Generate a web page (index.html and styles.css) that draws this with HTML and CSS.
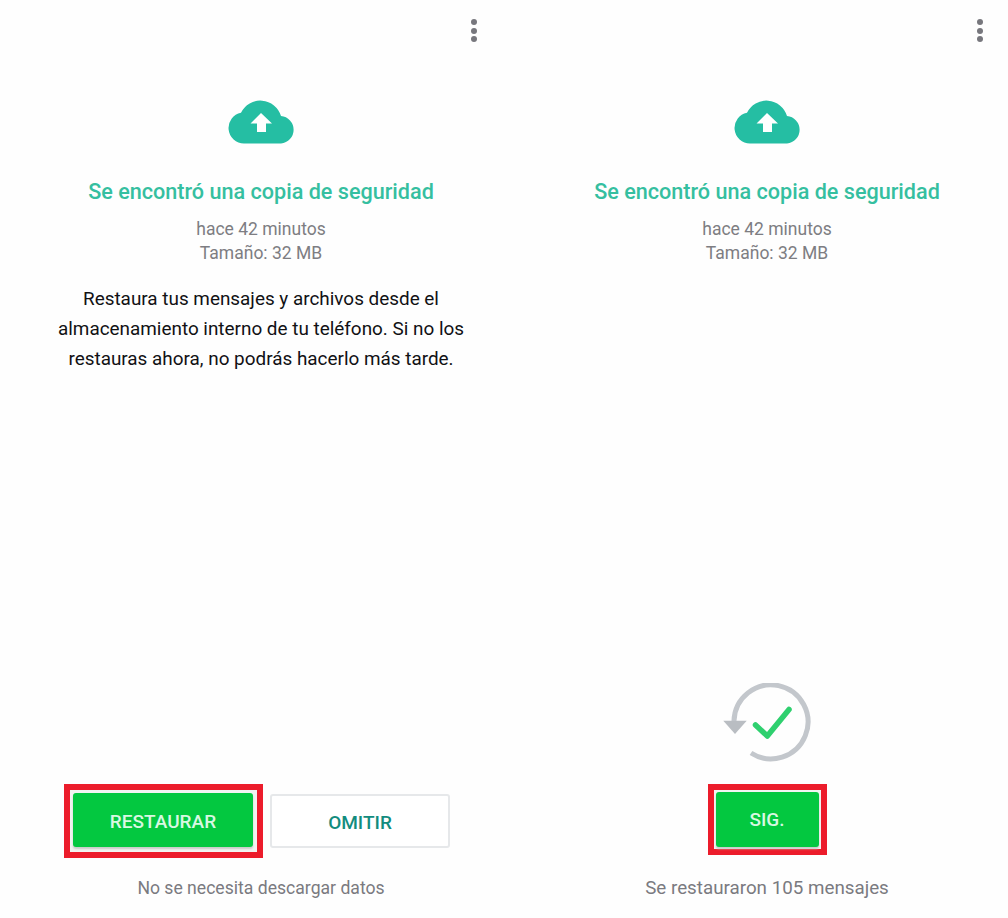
FILE: index.html
```html
<!DOCTYPE html>
<html lang="es">
<head>
<meta charset="utf-8">
<title>Copia de seguridad</title>
<link rel="stylesheet" href="styles.css">
</head>
<body>
<main class="page">
  <section class="panel">
    <div class="menu"><span class="dot"></span><span class="dot"></span><span class="dot"></span></div>
    <svg class="cloud" viewBox="0 0 66 44"><path fill="#25bea3" d="M16 43.500A15.500 15.500 0 0 1 13 12.800A21.500 21.500 0 0 1 53 16A13.800 13.800 0 0 1 53 43.500Z"/><path fill="#fff" d="M33 13 44 23.500H38V32H29V23.500H22.500Z"/></svg>
    <h1 class="title">Se encontró una copia de seguridad</h1>
    <p class="meta">hace 42 minutos<br>Tamaño: 32 MB</p>
    <p class="body">Restaura tus mensajes y archivos desde el almacenamiento interno de tu teléfono. Si no los restauras ahora, no podrás hacerlo más tarde.</p>
    <div class="actions">
      <div class="frame frame-wide"><button class="btn btn-primary btn-wide">RESTAURAR</button></div>
      <button class="btn btn-outline">OMITIR</button>
    </div>
    <p class="foot">No se necesita descargar datos</p>
  </section>
  <section class="panel">
    <div class="menu"><span class="dot"></span><span class="dot"></span><span class="dot"></span></div>
    <svg class="cloud" viewBox="0 0 66 44"><path fill="#25bea3" d="M16 43.500A15.500 15.500 0 0 1 13 12.800A21.500 21.500 0 0 1 53 16A13.800 13.800 0 0 1 53 43.500Z"/><path fill="#fff" d="M33 13 44 23.500H38V32H29V23.500H22.500Z"/></svg>
    <h1 class="title">Se encontró una copia de seguridad</h1>
    <p class="meta">hace 42 minutos<br>Tamaño: 32 MB</p>
    <svg class="restored" viewBox="0 0 90 80"><path fill="none" stroke="#c3c7cc" stroke-width="5" d="M12 38A37 37 0 1 1 29 70"/><path fill="#b9bdc2" d="M1.300 37.700H24.700L13 51z"/><path fill="none" stroke="#2fd06f" stroke-width="5.500" stroke-linecap="round" stroke-linejoin="round" d="M33.500 42 45.300 53 67 26.500"/></svg>
    <div class="frame frame-narrow"><button class="btn btn-primary btn-narrow">SIG.</button></div>
    <p class="foot foot-done">Se restauraron 105 mensajes</p>
  </section>
</main>
</body>
</html>
```
FILE: styles.css
```css
* { box-sizing: border-box; }
html, body { margin: 0; height: 100%; background: #fefefe; overflow: hidden; }
body { font-family: Roboto, "Liberation Sans", sans-serif; }
.page { display: flex; gap: 24px; padding-left: 20px; height: 918px; }
.panel { width: 482px; height: 918px; display: flex; flex-direction: column; align-items: center; position: relative; }
.menu { position: absolute; top: 19px; right: 25px; display: flex; flex-direction: column; gap: 2.5px; }
.dot { width: 6px; height: 6px; border-radius: 50%; background: #77777d; }
.cloud { width: 66px; height: 44px; margin-top: 100px; flex: none; }
.title { margin: 33px 0 0; font-size: 21.6px; line-height: 30px; font-weight: 500; color: #35bfa0; white-space: nowrap; }
.meta { margin: 10px 0 0; font-size: 17.5px; line-height: 24px; color: #7d7d82; text-align: center; }
.body { margin: 19px 0 0; width: 420px; font-size: 18.9px; line-height: 30px; color: #111114; text-align: center; }
.actions { margin: auto 8px 0 0; display: flex; align-items: center; gap: 7px; }
.frame { border: 6px solid #ec1c2b; padding: 2px; background: #f2f4f2; display: flex; flex: none; }
.frame-wide { width: 199px; height: 74px; padding: 3px; }
.frame-narrow { width: 119px; height: 71px; margin-top: auto; }
.btn { font-family: inherit; font-size: 19px; font-weight: 500; border-radius: 3px; padding: 2px 0 0; }
.btn-primary { background: #03c840; color: #d8f8e2; border: 0; box-shadow: 0 2px 2px #c8cbc8; }
.btn-wide { width: 180px; height: 54px; }
.btn-narrow { width: 103px; height: 55px; padding-top: 0; }
.btn-outline { width: 180px; height: 54px; background: #fff; border: 2px solid #e6e8ea; color: #128c7e; }
.foot { margin: 19px 0 19px; font-size: 17.6px; line-height: 22px; color: #7a7a80; }
.foot-done { margin-top: 22px; font-size: 18.8px; }
.restored { width: 90px; height: 80px; margin-top: auto; flex: none; }
.restored + .frame { margin-top: 21px; }
```
